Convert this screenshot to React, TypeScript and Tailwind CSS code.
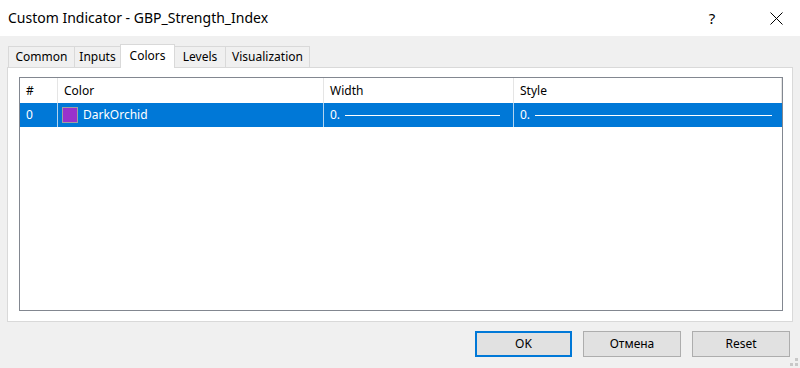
import React from "react";

const font = { fontFamily: '"Segoe UI", "Noto Sans", "Open Sans", sans-serif' };

function Tab({ label, active, w }: { label: string; active?: boolean; w: string }) {
  if (active) {
    return (
      <div
        className={`relative z-10 -mb-px h-[24px] ${w} border border-b-0 border-[#d9d9d9] bg-white flex items-start justify-center pt-[2px] text-[12px] text-black`}
      >
        {label}
      </div>
    );
  }
  return (
    <div
      className={`h-[21px] ${w} border border-b-0 border-[#d9d9d9] bg-[#f0f0f0] flex items-center justify-center text-[12px] text-black`}
    >
      {label}
    </div>
  );
}

export default function App() {
  return (
    <div className="w-[800px] h-[368px] bg-[#f0f0f0] flex flex-col overflow-hidden relative" style={font}>
      {/* Title bar */}
      <div className="h-[36px] bg-white flex items-center pl-[8px] text-[14px] text-black">
        <span className="flex-1 -mt-[1px]">Custom Indicator - GBP_Strength_Index</span>
        <span className="w-[46px] text-center text-[15px] mr-[18px]">?</span>
        <span className="w-[46px] flex items-center justify-center mr-[1px]">
          <svg width="13" height="13" viewBox="0 0 13 13">
            <path d="M0.5 0.5 L12.5 12.5 M12.5 0.5 L0.5 12.5" stroke="#000" strokeWidth="1" fill="none" />
          </svg>
        </span>
      </div>

      {/* Tabs */}
      <div className="mt-[8px] pl-[8px] flex items-end">
        <Tab label="Common" w="w-[67px]" />
        <Tab label="Inputs" w="w-[47px] -ml-px" />
        <Tab label="Colors" active w="w-[55px] -ml-px" />
        <Tab label="Levels" w="w-[52px] -ml-px" />
        <Tab label="Visualization" w="w-[85px] -ml-px" />
      </div>

      {/* Panel */}
      <div className="mx-[7px] h-[255px] border border-[#d9d9d9] bg-white pt-[9px] pl-[11px] pr-[9px] pb-[10px] flex">
        <div className="flex-1 border border-[#828790] bg-white flex flex-col">
          {/* Header */}
          <div className="h-[25px] flex text-[12px] text-black">
            <div className="w-[38px] pl-[6px] flex items-center border-r border-[#e5e5e5]">#</div>
            <div className="w-[266px] pl-[6px] flex items-center border-r border-[#e5e5e5]">Color</div>
            <div className="w-[190px] pl-[6px] flex items-center border-r border-[#e5e5e5]">Width</div>
            <div className="w-[268px] pl-[6px] flex items-center border-r border-[#e5e5e5]">Style</div>
          </div>
          {/* Selected row */}
          <div className="h-[24px] bg-[#0078d7] flex text-[12px] text-white">
            <div className="w-[38px] pl-[6px] flex items-center border-r border-[#b3d4ef]">0</div>
            <div className="w-[266px] pl-[4px] flex items-center gap-[5px] border-r border-[#b3d4ef]">
              <span className="w-[16px] h-[16px] bg-[#9932cc] border border-[#a0a0a0]" />
              <span>DarkOrchid</span>
            </div>
            <div className="w-[190px] pl-[6px] pr-[13px] flex items-center gap-[5px] border-r border-[#b3d4ef]">
              <span>0.</span>
              <span className="flex-1 h-px bg-white" />
            </div>
            <div className="w-[268px] pl-[6px] pr-[10px] flex items-center gap-[5px]">
              <span>0.</span>
              <span className="flex-1 h-px bg-white" />
            </div>
          </div>
        </div>
      </div>

      {/* Buttons */}
      <div className="mt-[9px] pr-[10px] flex justify-end gap-[11px] text-[12px] text-black">
        <div className="w-[97px] h-[26px] bg-[#e1e1e1] border-2 border-[#0078d7] flex items-center justify-center">OK</div>
        <div className="w-[98px] h-[26px] bg-[#e1e1e1] border border-[#adadad] flex items-center justify-center">Отмена</div>
        <div className="w-[98px] h-[26px] bg-[#e1e1e1] border border-[#adadad] flex items-center justify-center">Reset</div>
      </div>

      {/* Size grip */}
      <svg className="absolute right-[2px] bottom-[2px]" width="8" height="8" viewBox="0 0 8 8">
        <rect x="5" y="0" width="3" height="3" fill="#c8c8c8" />
        <rect x="0" y="5" width="3" height="3" fill="#c8c8c8" />
        <rect x="5" y="5" width="3" height="3" fill="#c8c8c8" />
      </svg>
    </div>
  );
}
